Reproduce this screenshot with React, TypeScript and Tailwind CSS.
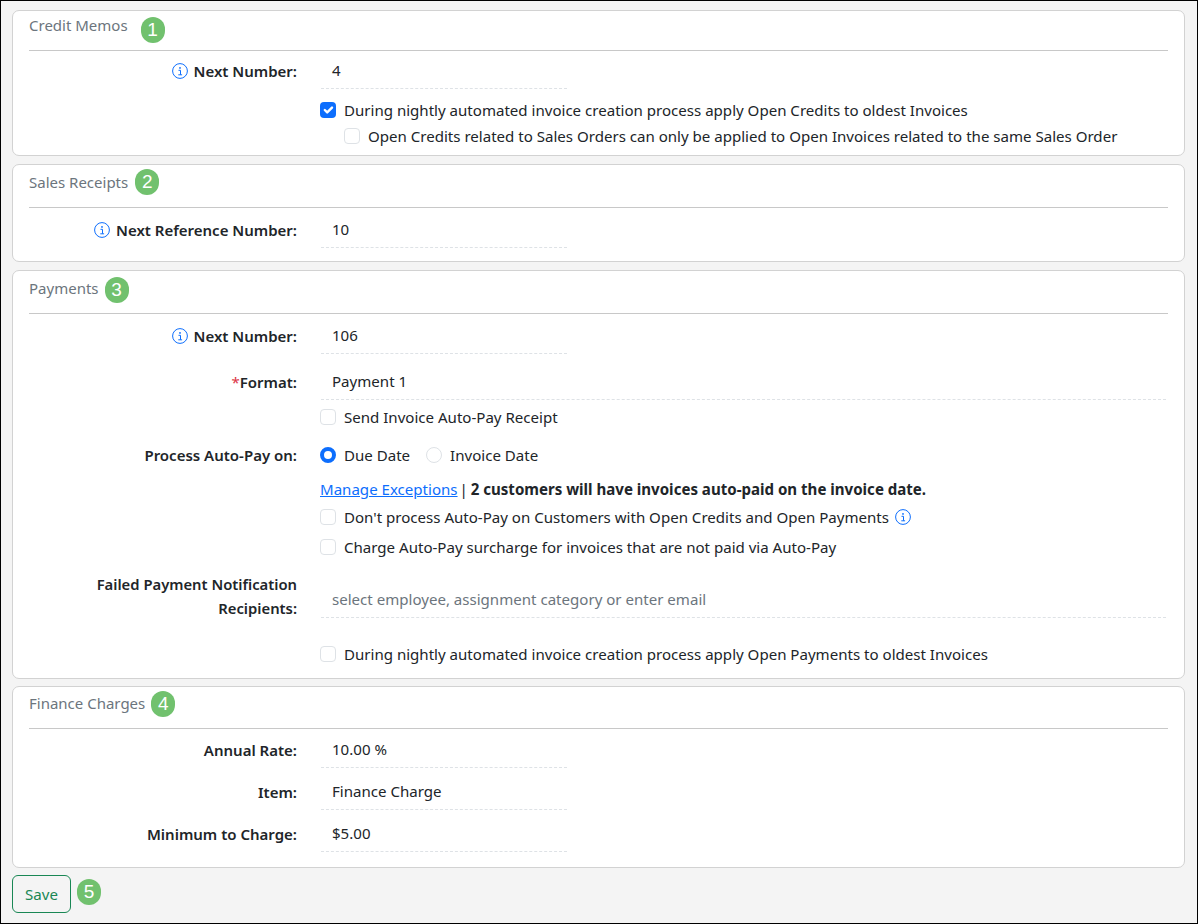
import React from "react";

function InfoIcon({ className = "" }: { className?: string }) {
  return (
    <svg viewBox="0 0 16 16" className={"w-[16px] h-[16px] shrink-0 " + className} fill="none" stroke="#0d6efd">
      <circle cx="8" cy="8" r="7.4" strokeWidth="1" />
      <path d="M6.5 7.3h2v4.4M6.3 11.8h3.8" strokeWidth="1" />
      <circle cx="8" cy="4.9" r="0.9" fill="#0d6efd" stroke="none" />
    </svg>
  );
}

function Badge({ n, className = "" }: { n: number; className?: string }) {
  return (
    <span className={"block shrink-0 w-[24px] h-[26px] rounded-full bg-[#71c16e] text-white text-[19px] leading-[26px] text-center font-['Liberation_Sans',sans-serif] " + className}>
      {n}
    </span>
  );
}

function Check({ checked = false }: { checked?: boolean }) {
  if (checked) {
    return (
      <span className="w-[16px] h-[16px] rounded-[4px] bg-[#0d6efd] flex items-center justify-center shrink-0">
        <svg viewBox="0 0 20 20" className="w-[16px] h-[16px]" fill="none" stroke="#fff" strokeWidth="3" strokeLinecap="round" strokeLinejoin="round">
          <path d="m6 10 3 3 6-6" />
        </svg>
      </span>
    );
  }
  return <span className="w-[16px] h-[16px] rounded-[4px] border border-[#dee2e6] bg-white shrink-0" />;
}

function Radio({ checked = false }: { checked?: boolean }) {
  return checked ? (
    <span className="w-[16px] h-[16px] rounded-full border-[4px] border-[#0d6efd] bg-white shrink-0" />
  ) : (
    <span className="w-[16px] h-[16px] rounded-full border border-[#dee2e6] bg-white shrink-0" />
  );
}

function Card({ title, n, head, badge, className, children }: { title: string; n: number; head: string; badge: string; className: string; children: React.ReactNode }) {
  return (
    <section className={"bg-white border border-[#d2d2d2] rounded-[7px] px-[16px] " + className}>
      <div className={"border-b border-[#c8c8c8] flex items-start " + head}>
        <h3 className="text-[15px] leading-[28px] text-[#6c757d] font-normal">{title}</h3>
        <Badge n={n} className={badge} />
      </div>
      {children}
    </section>
  );
}

function Row({ label, info, className = "", wide, value, required }: { label: string; info?: boolean; className?: string; wide?: boolean; value: string; required?: boolean }) {
  return (
    <div className={"flex " + className}>
      <div className="w-[268px] flex items-center justify-end gap-[6px] font-semibold text-[15px] text-[#212529] h-[38px] pt-[2px]">
        {info && <InfoIcon />}
        <span>
          {required && <span className="text-[#dc3545] font-normal">*</span>}
          {label}:
        </span>
      </div>
      <div className={"ml-[24px] h-[38px] pl-[11px] pt-[2px] flex items-center border-b border-dashed border-[#dee2e6] text-[#212529] " + (wide ? "flex-1 mr-[2px]" : "w-[246px]")}>
        {value}
      </div>
    </div>
  );
}

function CheckRow({ text, checked, className = "", children }: { text: string; checked?: boolean; className?: string; children?: React.ReactNode }) {
  return (
    <div className={"flex items-center h-[24px] gap-[8px] text-[#212529] " + className}>
      <Check checked={checked} />
      <span>{text}</span>
      {children}
    </div>
  );
}

export default function App() {
  return (
    <div className="w-[1198px] h-[924px] bg-[#f4f4f4] border border-black pl-[11px] pr-[12px] pt-[9px] flex flex-col text-[15.07px] overflow-hidden font-['Noto_Sans',sans-serif]">
      <Card title="Credit Memos" n={1} head="h-[40px]" badge="ml-[13px] mt-[6px]" className="h-[146px]">
        <Row label="Next Number" info value="4" />
        <CheckRow text="During nightly automated invoice creation process apply Open Credits to oldest Invoices" checked className="pl-[291px] mt-[9px]" />
        <CheckRow text="Open Credits related to Sales Orders can only be applied to Open Invoices related to the same Sales Order" className="pl-[315px] mt-[2px]" />
      </Card>

      <Card title="Sales Receipts" n={2} head="h-[43px] pt-[3px]" badge="ml-[7px] mt-[1px]" className="h-[98px] mt-[8px]">
        <Row label="Next Reference Number" info value="10" className="mt-[2px]" />
      </Card>

      <Card title="Payments" n={3} head="h-[43px] pt-[3px]" badge="ml-[6px] mt-[3px]" className="h-[409px] mt-[8px]">
        <Row label="Next Number" info value="106" className="mt-[2px]" />
        <Row label="Format" required wide value="Payment 1" className="mt-[8px]" />
        <CheckRow text="Send Invoice Auto-Pay Receipt" className="pl-[291px] mt-[5px]" />
        <div className="flex items-center h-[24px] mt-[14px]">
          <div className="w-[268px] text-right font-semibold text-[15px] text-[#212529]">Process Auto-Pay on:</div>
          <div className="ml-[23px] flex items-center gap-[8px] text-[#212529]">
            <Radio checked />
            <span>Due Date</span>
            <span className="ml-[8px] flex items-center gap-[8px]">
              <Radio />
              <span>Invoice Date</span>
            </span>
          </div>
        </div>
        <div className="pl-[291px] mt-[10px] h-[24px] leading-[24px] text-[#212529]">
          <a className="text-[#0d6efd] underline">Manage Exceptions</a> <span className="ml-[-2px] mr-[-1px]">|</span> <b className="font-bold">2 customers will have invoices auto-paid on the invoice date.</b>
        </div>
        <CheckRow text="Don't process Auto-Pay on Customers with Open Credits and Open Payments" className="pl-[291px] mt-[4px]">
          <InfoIcon className="ml-[-2px]" />
        </CheckRow>
        <CheckRow text="Charge Auto-Pay surcharge for invoices that are not paid via Auto-Pay" className="pl-[291px] mt-[6px]" />
        <div className="flex mt-[13px]">
          <div className="w-[268px] text-right font-semibold text-[14.8px] text-[#212529] leading-[24px]">
            Failed Payment Notification Recipients:
          </div>
          <div className="ml-[24px] mr-[2px] mt-[8px] flex-1 h-[38px] pl-[11px] pt-[2px] flex items-center border-b border-dashed border-[#dee2e6] text-[#6c757d]">
            select employee, assignment category or enter email
          </div>
        </div>
        <CheckRow text="During nightly automated invoice creation process apply Open Payments to oldest Invoices" className="pl-[291px] mt-[22px]" />
      </Card>

      <Card title="Finance Charges" n={4} head="h-[42px] pt-[2px]" badge="ml-[6px] mt-[2px]" className="h-[182px] mt-[7px]">
        <Row label="Annual Rate" value="10.00 %" className="mt-[1px]" />
        <Row label="Item" value="Finance Charge" className="mt-[4px]" />
        <Row label="Minimum to Charge" value="$5.00" className="mt-[4px]" />
      </Card>

      <div className="flex items-start gap-[6px] mt-[7px]">
        <button className="w-[59px] h-[38px] border border-[#198754] rounded-[6px] text-[#198754]">Save</button>
        <Badge n={5} className="mt-[4px]" />
      </div>
    </div>
  );
}
